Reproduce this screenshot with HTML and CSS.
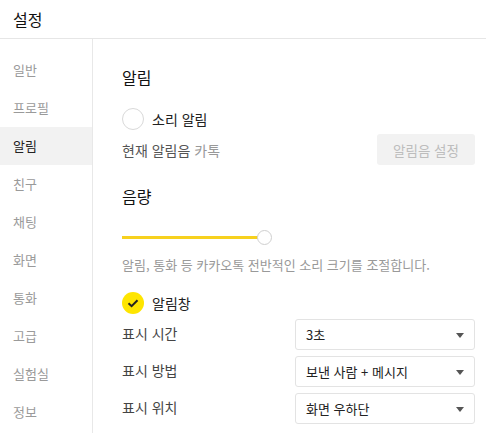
FILE: index.html
```html
<!DOCTYPE html>
<html lang="ko">
<head>
    <meta charset="UTF-8">
    <meta name="viewport" content="width=device-width, initial-scale=1.0">
    <title>설정</title>
    <link rel="stylesheet" href="styles.css">
</head>
<body>
    <div class="header">설정</div>
    <div class="main">
        <ul class="menu">
            <li>일반</li>
            <li>프로필</li>
            <li class="active">알림</li>
            <li>친구</li>
            <li>채팅</li>
            <li>화면</li>
            <li>통화</li>
            <li>고급</li>
            <li>실험실</li>
            <li>정보</li>
        </ul>
        <div class="content">
            <h2>알림</h2>
            <div class="option sound">
                <span class="radio"></span>
                <span>소리 알림</span>
            </div>
            <div class="row current">
                <span>현재 알림음 <span class="muted">카톡</span></span>
                <button class="btn">알림음 설정</button>
            </div>

            <h2 class="volume-title">음량</h2>
            <div class="slider">
                <div class="track"></div>
                <div class="knob"></div>
            </div>
            <p class="desc">알림, 통화 등 카카오톡 전반적인 소리 크기를 조절합니다.</p>

            <div class="option popup">
                <span class="check">
                    <svg width="22" height="22" viewBox="0 0 22 22">
                        <path d="M6.5 11.2 L9.6 14.2 L15.5 8.2" fill="none" stroke="#222" stroke-width="2"/>
                    </svg>
                </span>
                <span>알림창</span>
            </div>
            <div class="fields">
                <div class="row">
                    <span class="label">표시 시간</span>
                    <div class="select">3초<span class="arrow"></span></div>
                </div>
                <div class="row">
                    <span class="label">표시 방법</span>
                    <div class="select">보낸 사람 + 메시지<span class="arrow"></span></div>
                </div>
                <div class="row">
                    <span class="label">표시 위치</span>
                    <div class="select">화면 우하단<span class="arrow"></span></div>
                </div>
            </div>
        </div>
    </div>
</body>
</html>
```

FILE: styles.css
```css
body {
    font-family: "Noto Sans CJK KR", "Noto Sans", sans-serif;
    margin: 0;
    background-color: #fff;
    color: #222;
    font-size: 13px;
}
.header {
    height: 38px;
    line-height: 38px;
    padding-left: 13px;
    font-size: 16px;
    color: #111;
    border-bottom: 1px solid #e6e6e6;
}
.main {
    display: flex;
    height: 394px;
}
.menu {
    list-style: none;
    margin: 0;
    padding: 12px 0 0;
    width: 92px;
    border-right: 1px solid #e8e8e8;
}
.menu li {
    height: 38px;
    line-height: 38px;
    padding-left: 13px;
    color: #9a9a9a;
}
.menu li.active {
    background-color: #f2f2f2;
    color: #222;
}
.content {
    flex: 1;
    padding: 27px 11px 0 29px;
}
h2 {
    margin: 0;
    font-size: 16px;
    font-weight: normal;
    line-height: 22px;
    color: #111;
}
.option {
    display: flex;
    align-items: center;
    gap: 8px;
    height: 22px;
    line-height: 22px;
    font-size: 14px;
}
.sound {
    margin-top: 20px;
}
.radio {
    width: 20px;
    height: 20px;
    border: 1px solid #d9d9d9;
    border-radius: 50%;
}
.check {
    width: 22px;
    height: 22px;
    border-radius: 50%;
    background-color: #fee500;
}
.check svg {
    display: block;
}
.row {
    display: flex;
    align-items: center;
    justify-content: space-between;
}
.current {
    margin-top: 4px;
    color: #555;
    font-size: 14px;
}
.muted {
    color: #999;
}
.btn {
    width: 98px;
    height: 31px;
    border: none;
    border-radius: 3px;
    background-color: #f2f2f2;
    color: #bdbdbd;
    font-family: inherit;
    font-size: 13.5px;
    padding: 0;
}
.volume-title {
    margin-top: 20px;
}
.slider {
    position: relative;
    width: 150px;
    height: 14px;
    margin-top: 23px;
}
.track {
    position: absolute;
    left: 0;
    top: 6px;
    width: 136px;
    height: 3px;
    background-color: #f7d11e;
}
.knob {
    position: absolute;
    left: 135px;
    top: 0;
    width: 13px;
    height: 13px;
    border: 1px solid #cfcfcf;
    border-radius: 50%;
    background-color: #fff;
}
.desc {
    margin: 12px 0 0;
    font-size: 13px;
    line-height: 18px;
    color: #999;
}
.popup {
    margin-top: 18px;
}
.fields {
    display: flex;
    flex-direction: column;
    gap: 6px;
    margin-top: 5px;
}
.label {
    color: #444;
    font-size: 14px;
    margin-top: -4px;
}
.select {
    position: relative;
    box-sizing: border-box;
    width: 180px;
    height: 31px;
    line-height: 29px;
    padding-left: 10px;
    border: 1px solid #e3e3e3;
    border-radius: 3px;
    color: #222;
}
.arrow {
    position: absolute;
    right: 10px;
    top: 13px;
    border-left: 4px solid transparent;
    border-right: 4px solid transparent;
    border-top: 5px solid #555;
}
```
